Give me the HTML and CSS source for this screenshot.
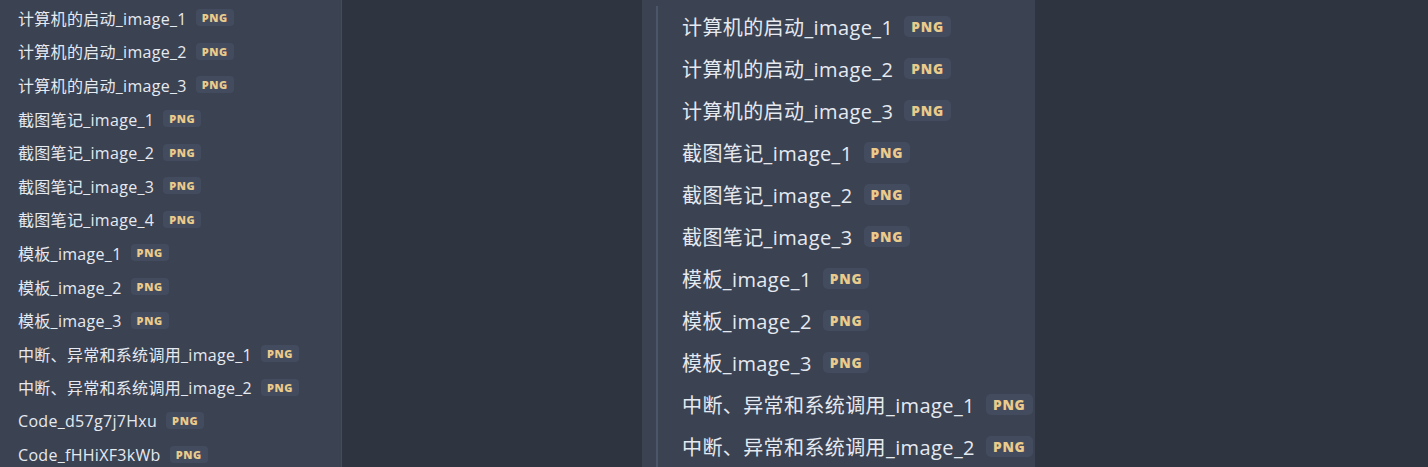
FILE: index.html
```html
<!DOCTYPE html>
<html lang="zh">
<head>
<meta charset="utf-8">
<link rel="stylesheet" href="styles.css">
</head>
<body>
<div class="app">
  <aside class="sidebar">
    <ul class="list">
      <li class="item"><span class="name">计算机的启动_image_1</span><span class="badge">PNG</span></li>
      <li class="item"><span class="name">计算机的启动_image_2</span><span class="badge">PNG</span></li>
      <li class="item"><span class="name">计算机的启动_image_3</span><span class="badge">PNG</span></li>
      <li class="item"><span class="name">截图笔记_image_1</span><span class="badge">PNG</span></li>
      <li class="item"><span class="name">截图笔记_image_2</span><span class="badge">PNG</span></li>
      <li class="item"><span class="name">截图笔记_image_3</span><span class="badge">PNG</span></li>
      <li class="item"><span class="name">截图笔记_image_4</span><span class="badge">PNG</span></li>
      <li class="item"><span class="name">模板_image_1</span><span class="badge">PNG</span></li>
      <li class="item"><span class="name">模板_image_2</span><span class="badge">PNG</span></li>
      <li class="item"><span class="name">模板_image_3</span><span class="badge">PNG</span></li>
      <li class="item"><span class="name">中断、异常和系统调用_image_1</span><span class="badge">PNG</span></li>
      <li class="item"><span class="name">中断、异常和系统调用_image_2</span><span class="badge">PNG</span></li>
      <li class="item"><span class="name">Code_d57g7j7Hxu</span><span class="badge">PNG</span></li>
      <li class="item"><span class="name">Code_fHHiXF3kWb</span><span class="badge">PNG</span></li>
    </ul>
  </aside>
  <main class="middle"></main>
  <section class="preview">
    <ul class="list list-large">
      <li class="item"><span class="name">计算机的启动_image_1</span><span class="badge">PNG</span></li>
      <li class="item"><span class="name">计算机的启动_image_2</span><span class="badge">PNG</span></li>
      <li class="item"><span class="name">计算机的启动_image_3</span><span class="badge">PNG</span></li>
      <li class="item"><span class="name">截图笔记_image_1</span><span class="badge">PNG</span></li>
      <li class="item"><span class="name">截图笔记_image_2</span><span class="badge">PNG</span></li>
      <li class="item"><span class="name">截图笔记_image_3</span><span class="badge">PNG</span></li>
      <li class="item"><span class="name">模板_image_1</span><span class="badge">PNG</span></li>
      <li class="item"><span class="name">模板_image_2</span><span class="badge">PNG</span></li>
      <li class="item"><span class="name">模板_image_3</span><span class="badge">PNG</span></li>
      <li class="item"><span class="name">中断、异常和系统调用_image_1</span><span class="badge">PNG</span></li>
      <li class="item"><span class="name">中断、异常和系统调用_image_2</span><span class="badge">PNG</span></li>
    </ul>
  </section>
  <div class="rest"></div>
</div>
</body>
</html>
```
FILE: styles.css
```css
* { box-sizing: border-box; }
html, body { margin: 0; padding: 0; }
body {
  background: #2e3440;
  font-family: "Open Sans", "Noto Sans CJK SC", sans-serif;
  color: #e5e9f0;
  height: 467px;
  overflow: hidden;
}
.app {
  display: flex;
  height: 467px;
}
.sidebar {
  width: 342px;
  flex: none;
  background: #3b4252;
  border-right: 1px solid #434c5e;
  padding-top: 1px;
}
.middle {
  width: 300px;
  flex: none;
  background: #2e3440;
}
.preview {
  width: 393px;
  flex: none;
  background: #3b4252;
  padding: 6px 0 0 14px;
}
.rest { flex: 1; background: #2e3440; }
.list {
  list-style: none;
  margin: 0;
  padding: 0 0 0 18px;
  display: flex;
  flex-direction: column;
}
.item {
  height: 33.6px;
  display: flex;
  align-items: center;
  gap: 9px;
  font-size: 16px;
  white-space: nowrap;
}
.name { letter-spacing: 0.3px; }
.badge {
  font-size: 11px;
  font-weight: 800;
  color: #ebcb8b;
  background: #434c5e;
  border-radius: 4px;
  padding: 0 6px;
  height: 17px;
  line-height: 17px;
  letter-spacing: 0.6px;
}
.list-large {
  border-left: 2px solid #4c566a;
  padding-left: 24px;
  padding-top: 0;
  margin-top: 0;
}
.list-large .item {
  height: 42px;
  font-size: 20px;
  gap: 11px;
  padding-bottom: 2px;
}
.list-large .name { letter-spacing: 0.4px; }
.list-large .badge {
  font-size: 13.75px;
  height: 21px;
  line-height: 21px;
  padding: 0 7px;
  border-radius: 5px;
  letter-spacing: 0.75px;
}
```
